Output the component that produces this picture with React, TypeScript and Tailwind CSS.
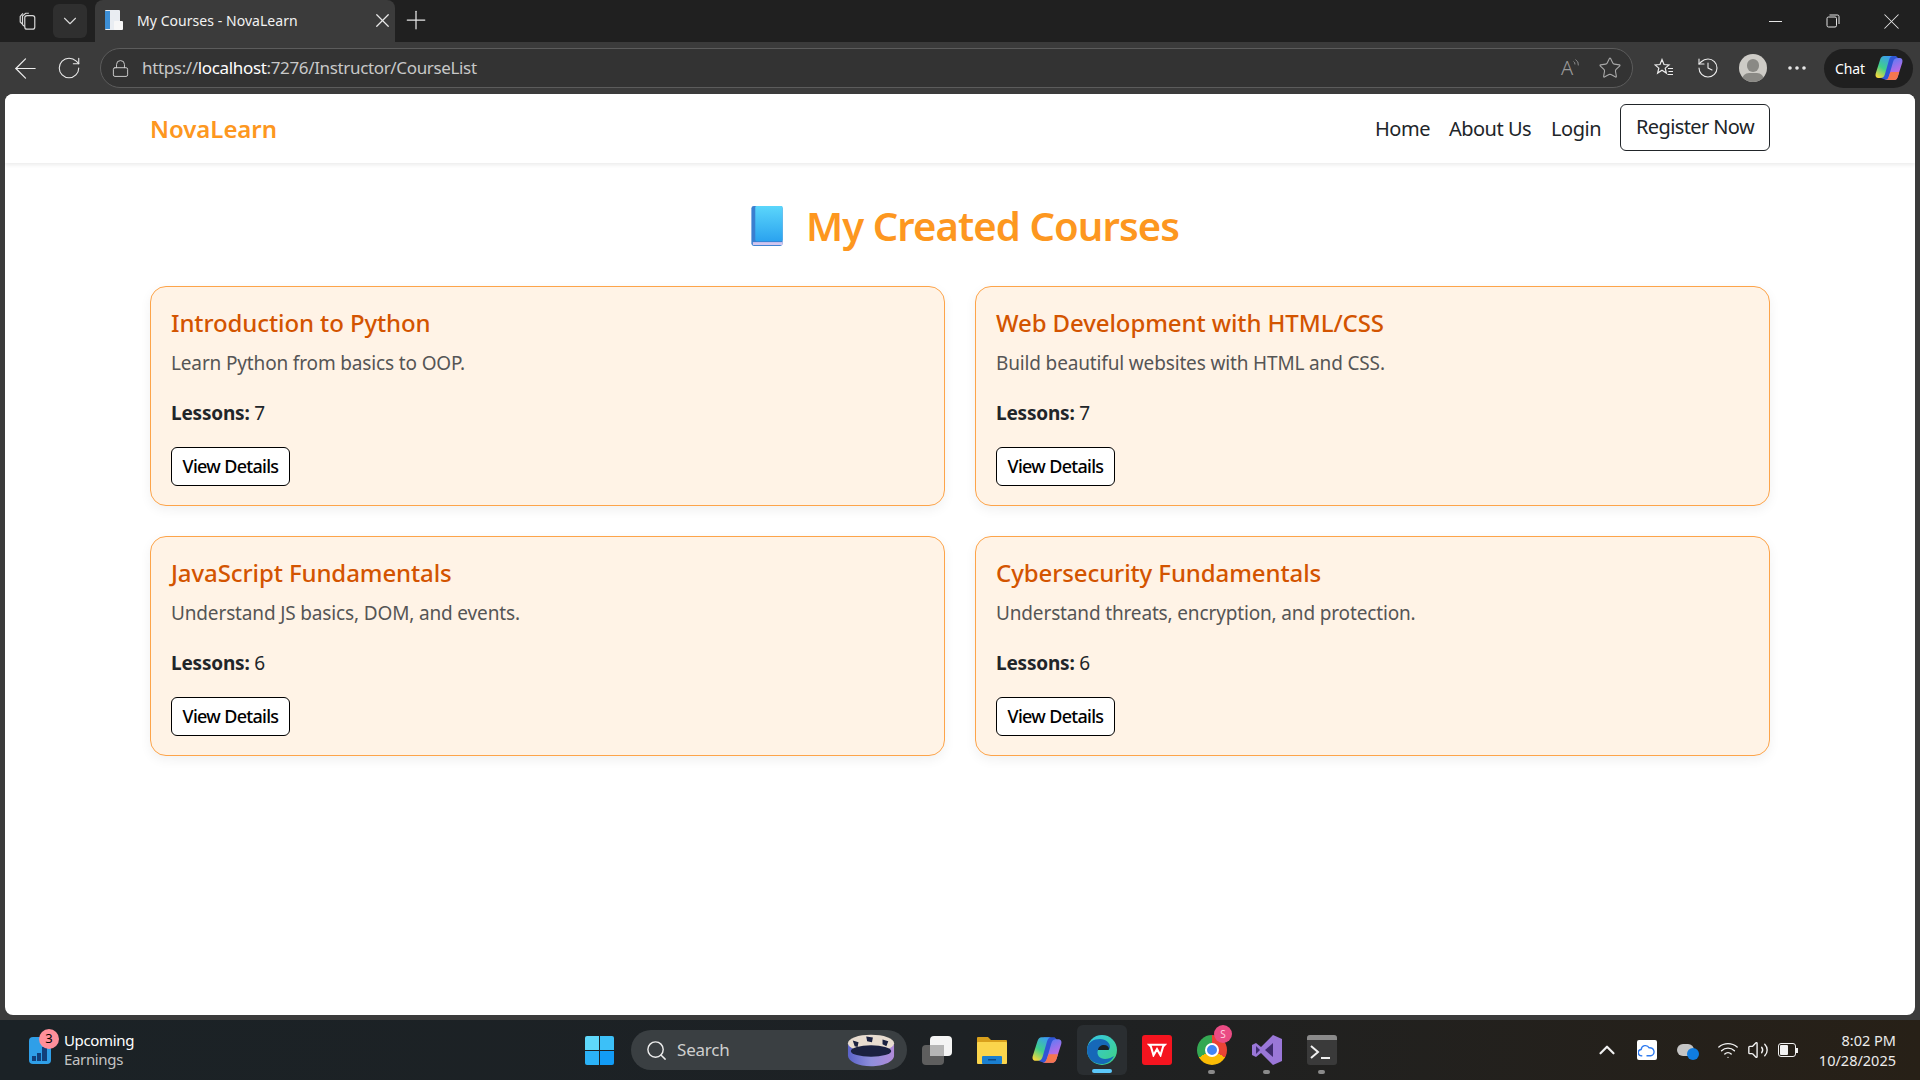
import { ChevronDown, ChevronUp, ArrowLeft, History, Lock, MoreHorizontal, Plus, RotateCw, Search, Star, Volume2, Wifi, X } from "lucide-react";

const courses = [
  { title: "Introduction to Python", description: "Learn Python from basics to OOP.", lessons: 7 },
  { title: "Web Development with HTML/CSS", description: "Build beautiful websites with HTML and CSS.", lessons: 7 },
  { title: "JavaScript Fundamentals", description: "Understand JS basics, DOM, and events.", lessons: 6 },
  { title: "Cybersecurity Fundamentals", description: "Understand threats, encryption, and protection.", lessons: 6 },
];

function BookIcon({ className }: { className?: string }) {
  return (
    <svg viewBox="0 0 32 42" className={className}>
      <defs>
        <linearGradient id="bookFill" x1="0" y1="0" x2="0" y2="1">
          <stop offset="0" stopColor="#5bd6fb" />
          <stop offset="1" stopColor="#2ba3ef" />
        </linearGradient>
      </defs>
      <rect x="0" y="0" width="32" height="41" rx="2.5" fill="#3a7fd0" />
      <rect x="4" y="0" width="28" height="36" rx="1.5" fill="url(#bookFill)" />
      <rect x="1.5" y="37" width="30.5" height="3" fill="#d3c6ee" />
    </svg>
  );
}

function CopilotIcon({ className, id }: { className?: string; id: string }) {
  return (
    <svg viewBox="0 0 28 28" className={className}>
      <defs>
        <linearGradient id={`${id}A`} x1="0.7" y1="0" x2="0.2" y2="1">
          <stop offset="0" stopColor="#3b9cf0" />
          <stop offset="0.55" stopColor="#3fd08a" />
          <stop offset="1" stopColor="#f6d83c" />
        </linearGradient>
        <linearGradient id={`${id}B`} x1="0.4" y1="0" x2="0.8" y2="1">
          <stop offset="0" stopColor="#5a7df5" />
          <stop offset="0.55" stopColor="#b06ce8" />
          <stop offset="1" stopColor="#ec6fc0" />
        </linearGradient>
      </defs>
      <path d="M11 2h10l2 2-5 20-7 2-5-2z" fill="#2f55d4" />
      <path d="M9 2h9c-2 0-3 1-4 4l-4 14c-1 3-2 4-5 4H3.500C1 24 0 22 .7 19.500L5 6C6 3 7 2 9 2z" fill={`url(#${id}A)`} />
      <path d="M19 26h-9c2 0 3-1 4-4l4-14c1-3 2-4 5-4h1.500c2.500 0 3.500 2 2.800 4.500L23 22c-1 3-2 4-4 4z" fill={`url(#${id}B)`} />
      <path d="M10 26h9c2 0 3-1 4-4l1.200-4H15.500L14 22c-1 3-2 4-4 4z" fill="#f4764f" />
    </svg>
  );
}

function TabStrip() {
  return (
    <div className="flex h-[42px] shrink-0 items-end bg-[#202020] font-['Noto_Sans',sans-serif] text-white">
      <div className="flex h-[42px] w-[42px] shrink-0 items-center justify-center pl-[12px]">
        <svg viewBox="0 0 20 22" className="h-[20px] w-[19px]" fill="none" stroke="#d8d8d8" strokeWidth="1.300">
          <rect x="7" y="5" width="11" height="15" rx="2.500" />
          <path d="M7 17 4.500 15V5.500L8 2.500h3.500M4 14 2 12V6l3-3.500" />
        </svg>
      </div>
      <div className="mb-[4px] ml-[11px] flex h-[34px] w-[34px] shrink-0 items-center justify-center rounded-md bg-[#2f2f2f]">
        <ChevronDown className="h-[22px] w-[22px] text-[#d8d8d8]" strokeWidth={1.200} />
      </div>
      <div className="ml-[8px] flex h-[42px] w-[300px] shrink-0 items-center rounded-t-lg bg-[#3b3b3b] pb-[2px] pl-[9px] pr-[1px]">
        <svg viewBox="0 0 20 22" className="h-[22px] w-[20px] shrink-0">
          <rect x="1" y="1" width="15" height="20" rx="1" fill="#e9edf2" />
          <rect x="1" y="2" width="5" height="18" fill="#3d8fd6" />
          <rect x="10" y="12" width="9" height="9" rx="1" fill="#f7f7f7" />
        </svg>
        <span className="ml-[13px] flex-1 text-[14px] tracking-[0.05px] text-[#f2f2f2]">My Courses - NovaLearn</span>
        <X className="h-[23px] w-[23px] text-[#e8e8e8]" strokeWidth={1.300} />
      </div>
      <div className="flex h-[42px] w-[42px] shrink-0 items-center justify-center pb-[2px]">
        <Plus className="h-[30px] w-[30px] text-[#e5e5e5]" strokeWidth={1} />
      </div>
      <div className="flex-1" />
      <div className="flex h-[42px] items-center">
        <div className="flex w-[58px] justify-center">
          <div className="h-[1px] w-[13px] bg-[#e5e5e5]" />
        </div>
        <div className="flex w-[58px] justify-center">
          <svg viewBox="0 0 14 14" className="h-[14px] w-[14px]" fill="none" stroke="#e5e5e5" strokeWidth="1">
            <rect x="1" y="3" width="9.500" height="10" rx="1.500" />
            <path d="M3.500 1h8a1.500 1.500 0 0 1 1.500 1.500V10" />
          </svg>
        </div>
        <div className="flex w-[58px] justify-center">
          <X className="h-[27px] w-[27px] text-[#e5e5e5]" strokeWidth={0.900} />
        </div>
      </div>
    </div>
  );
}

function Toolbar() {
  return (
    <div className="flex h-[52px] shrink-0 items-center bg-[#3b3b3b] font-['Noto_Sans',sans-serif] text-white">
      <div className="flex w-[100px] shrink-0 items-center gap-[14px] pl-[9px]">
        <ArrowLeft className="h-[33px] w-[33px] text-[#ececec]" strokeWidth={0.900} />
        <RotateCw className="h-[26px] w-[26px] text-[#ececec]" strokeWidth={1} />
      </div>
      <div className="flex h-[40px] w-[1533px] shrink-0 items-center rounded-full border border-[#5c5c5c] bg-[#333333] pl-[10px] pr-[10px]">
        <Lock className="h-[19px] w-[19px] text-[#d0d0d0]" strokeWidth={1.200} />
        <div className="ml-[12px] flex-1 text-[17px] tracking-[-0.35px] text-[#c8c8c8]">
          https://<span className="text-white">localhost</span>:7276/Instructor/CourseList
        </div>
        <div className="mr-[19px] flex w-[18px] items-start">
          <span className="text-[20px] font-light leading-none text-[#9a9a9a]">A</span>
          <svg viewBox="0 0 6 8" className="mt-[1px] h-[8px] w-[6px]" fill="none" stroke="#9a9a9a" strokeWidth="0.900">
            <path d="M0.500 2.500a3 3 0 0 1 1.500 3M2.500 0.500a6 6 0 0 1 3 6" />
          </svg>
        </div>
        <Star className="h-[24px] w-[24px] text-[#a8a8a8]" strokeWidth={1.100} />
      </div>
      <div className="ml-[21px] flex items-center">
        <svg viewBox="0 0 20 20" className="h-[20px] w-[20px]" fill="none" stroke="#ececec" strokeWidth="1.200">
          <path d="M8 1.500 10 6.500l5 .4-3.800 3.200 1.200 5L8 12.300 3.600 15.100l1.200-5L1 6.900l5-.4z" />
          <path d="M14 10.500h5M14.500 13.500h4.500M13.500 16.500h5.500" />
        </svg>
        <History className="ml-[22px] h-[24px] w-[24px] text-[#ececec]" strokeWidth={1.100} />
        <div className="relative ml-[19px] h-[28px] w-[28px] overflow-hidden rounded-full bg-[#cdcbc6]">
          <div className="absolute left-[8px] top-[5px] h-[13px] w-[12px] rounded-full bg-[#8a8985]" />
          <div className="absolute left-[3px] top-[19px] h-[14px] w-[22px] rounded-full bg-[#8a8985]" />
        </div>
        <MoreHorizontal className="ml-[18px] h-[24px] w-[24px] text-[#ececec]" strokeWidth={1.600} />
      </div>
      <div className="ml-[15px] flex h-[39px] w-[89px] shrink-0 items-center rounded-full bg-[#1f1f1f] pl-[11px]">
        <span className="text-[14px] tracking-[-0.1px]">Chat</span>
        <CopilotIcon id="chatCop" className="ml-[10px] h-[28px] w-[28px]" />
      </div>
    </div>
  );
}

function Navbar() {
  return (
    <nav className="flex h-[69px] shrink-0 items-center justify-between bg-white pl-[145px] pr-[145px] shadow-[0_2px_4px_rgba(0,0,0,0.08)]">
      <a className="text-[24px] font-semibold tracking-[-0.05px] text-[#fd9720]">NovaLearn</a>
      <div className="flex items-center text-[20px] tracking-[-0.5px] text-[#212529]">
        <a className="mr-[19px]">Home</a>
        <a className="mr-[20px]">About Us</a>
        <a className="mr-[19px]">Login</a>
        <a className="-mt-[3px] flex h-[47px] w-[150px] items-center justify-center rounded-md border border-[#212529] tracking-[-0.6px]">Register Now</a>
      </div>
    </nav>
  );
}

function CourseCard({ title, description, lessons }: { title: string; description: string; lessons: number }) {
  return (
    <div className="h-[220px] rounded-2xl border border-[#fda44a] bg-[#fff3e6] px-[20px] pt-[18px] shadow-[0_4px_12px_rgba(0,0,0,0.06)]">
      <h3 className="text-[24px] leading-[36px] font-medium tracking-[-0.1px] text-[#d35400]">{title}</h3>
      <p className="mt-[7px] text-[19px] leading-[30px] tracking-[-0.15px] text-[#555555]">{description}</p>
      <p className="mt-[20px] text-[19px] leading-[30px] tracking-[-0.2px] text-[#212529]">
        <b className="font-bold">Lessons:</b> {lessons}
      </p>
      <a className="mt-[19px] flex h-[39px] w-[119px] items-center justify-center rounded-md border border-black bg-white text-[18px] font-medium tracking-[-0.7px] text-black">
        View Details
      </a>
    </div>
  );
}

function Taskbar() {
  return (
    <div className="flex h-[60px] shrink-0 items-center bg-gradient-to-r from-[#1b2226] via-[#1d2124] to-[#272017] font-['Noto_Sans',sans-serif] text-white">
      <div className="flex w-[585px] shrink-0 items-center pl-[29px]">
        <div className="relative h-[27px] w-[22px] rounded-sm bg-[#2f9fe8]">
          <div className="absolute bottom-[3px] left-[3px] flex items-end gap-[1px]">
            <div className="h-[5px] w-[4px] bg-[#123f7a]" />
            <div className="h-[8px] w-[4px] bg-[#123f7a]" />
            <div className="h-[14px] w-[5px] bg-[#123f7a]" />
          </div>
          <div className="absolute -right-[8px] -top-[8px] flex h-[20px] w-[20px] items-center justify-center rounded-full bg-[#ff8f9a] text-[13px] text-black">3</div>
        </div>
        <div className="ml-[13px] text-[15px] leading-[19px] tracking-[-0.35px]">
          <div>Upcoming</div>
          <div className="text-[#c4c4c4]">Earnings</div>
        </div>
      </div>
      <div className="grid h-[29px] w-[29px] shrink-0 grid-cols-2 gap-[1px]">
        <div className="rounded-tl-[2px] bg-[#5fd8fa]" />
        <div className="rounded-tr-[2px] bg-[#3cc0f8]" />
        <div className="rounded-bl-[2px] bg-[#2bb2f7]" />
        <div className="rounded-br-[2px] bg-[#129bf5]" />
      </div>
      <div className="ml-[17px] flex h-[40px] w-[276px] shrink-0 items-center rounded-full bg-[#3a3f42] pl-[14px] pr-[12px]">
        <Search className="h-[23px] w-[23px] text-[#ececec]" strokeWidth={1.500} />
        <span className="ml-[9px] flex-1 text-[17px] tracking-[-0.2px] text-[#cfcfcf]">Search</span>
        <svg viewBox="0 0 50 36" className="h-[36px] w-[48px]">
          <defs>
            <linearGradient id="ringSide" x1="0" y1="0" x2="1" y2="0">
              <stop offset="0" stopColor="#5a62c8" />
              <stop offset="0.5" stopColor="#8f8fdc" />
              <stop offset="1" stopColor="#b08ad8" />
            </linearGradient>
          </defs>
          <path d="M1 12v12c0 6 11 11 24 11s24-5 24-11V12z" fill="url(#ringSide)" />
          <ellipse cx="25" cy="11" rx="24" ry="9" fill="#e8dcd0" />
          <ellipse cx="25" cy="19" rx="21" ry="6" fill="#1b2140" />
          <path d="M6 8l6 2-1 5-3-1zM20 4l7 1-1 5-5-1zM37 7l6 2-2 5-4-2z" fill="#1b2140" />
        </svg>
      </div>
      <div className="ml-[15px] flex items-center">
        <div className="relative h-[29px] w-[30px] shrink-0">
          <div className="absolute bottom-0 left-0 h-[20px] w-[22px] rounded-sm bg-[#5e5e5e]" />
          <div className="absolute right-0 top-0 h-[20px] w-[22px] rounded-sm bg-[#f4f4f4]" />
          <div className="absolute left-[8px] top-[9px] h-[11px] w-[14px] bg-[#b5b5b5]" />
        </div>
        <svg viewBox="0 0 30 30" className="ml-[25px] h-[30px] w-[30px]">
          <path d="M0 3a1 1 0 0 1 1-1h10l3 3h15a1 1 0 0 1 1 1v3H0z" fill="#d9a01c" />
          <rect x="0" y="7" width="30" height="22" rx="1" fill="#fbd54c" />
          <rect x="5" y="21" width="20" height="8" rx="1" fill="#1a7fd0" />
          <rect x="11" y="24" width="8" height="1.500" fill="#0c4a86" />
        </svg>
        <CopilotIcon id="barCop" className="ml-[25px] h-[30px] w-[30px]" />
        <div className="relative ml-[15px] flex h-[50px] w-[50px] items-center justify-center rounded-md bg-[#2a2e31]">
          <svg viewBox="0 0 32 32" className="h-[32px] w-[32px]">
            <defs>
              <linearGradient id="edgeA" x1="0" y1="0" x2="1" y2="1">
                <stop offset="0" stopColor="#36c7e8" />
                <stop offset="1" stopColor="#3fd27f" />
              </linearGradient>
            </defs>
            <circle cx="16" cy="16" r="15" fill="url(#edgeA)" />
            <path d="M1 16C1 8 8 5 14 5s10 4 10 8c0 2-1 3-3 3H12c-2 5 2 9 7 9 3 0 6-1 9-3-3 6-8 8-12 8C7 30 1 24 1 16z" fill="#1668b8" />
            <path d="M12 16c0-3 3-5 6-5s5 2 5 4c0 1-1 1-2 1z" fill="#1b2226" />
          </svg>
          <div className="absolute bottom-[2px] h-[4px] w-[20px] rounded-full bg-[#5cc8fa]" />
        </div>
        <div className="ml-[15px] flex h-[30px] w-[30px] items-center justify-center rounded-[3px] bg-[#f5141f]">
          <svg viewBox="0 0 20 16" className="h-[14px] w-[20px]" fill="none" stroke="#fff" strokeWidth="2.400">
            <path d="M1 2h18l-2 2-3 10-4-7-4 7-3-10z" />
          </svg>
        </div>
        <div className="relative ml-[25px] h-[30px] w-[30px]">
          <div className="h-[30px] w-[30px] rounded-full bg-[conic-gradient(#ea4335_0deg_120deg,#fbbc05_120deg_240deg,#34a853_240deg_360deg)]" />
          <div className="absolute left-[8px] top-[8px] h-[14px] w-[14px] rounded-full border-2 border-white bg-[#4285f4]" />
          <div className="absolute -right-[5px] -top-[10px] flex h-[18px] w-[18px] items-center justify-center rounded-full bg-[#ea4c84] text-[10px] text-[#ffd0e0]">S</div>
          <div className="absolute -bottom-[9px] left-[11px] h-[4px] w-[7px] rounded-full bg-[#8a8a8a]" />
        </div>
        <div className="relative ml-[25px] h-[30px] w-[30px]">
          <svg viewBox="0 0 30 30" className="h-[30px] w-[30px]">
            <path d="M21 0 30 4v22l-9 4L9 18l-5 4-4-2V10l4-2 5 4z" fill="#9a77d8" />
            <path d="M21 8v14l-8-7z" fill="#3e2b6e" />
            <path d="M4 11v8l4-4z" fill="#3e2b6e" />
          </svg>
          <div className="absolute -bottom-[9px] left-[11px] h-[4px] w-[7px] rounded-full bg-[#8a8a8a]" />
        </div>
        <div className="relative ml-[25px] h-[30px] w-[30px]">
          <div className="h-[30px] w-[30px] overflow-hidden rounded-[3px] bg-[#3a3a3a]">
            <div className="h-[5px] bg-[#8a8a8a]" />
            <svg viewBox="0 0 30 25" className="h-[25px] w-[30px]" fill="none" stroke="#f0f0f0" strokeWidth="2">
              <path d="M4 6l7 6-7 6" />
              <path d="M14 18h9" />
            </svg>
          </div>
          <div className="absolute -bottom-[9px] left-[11px] h-[4px] w-[7px] rounded-full bg-[#8a8a8a]" />
        </div>
      </div>
      <div className="flex-1" />
      <div className="flex items-center pr-[24px]">
        <ChevronUp className="h-[26px] w-[26px] text-[#f0f0f0]" strokeWidth={2} />
        <div className="ml-[17px] flex h-[20px] w-[20px] items-center justify-center rounded-[2px] bg-white">
          <svg viewBox="0 0 16 12" className="h-[13px] w-[17px]" fill="none" stroke="#2f7bf0" strokeWidth="1.300">
            <path d="M4 11H3.500a3 3 0 0 1-.5-6 4 4 0 0 1 7.500-1.500A3.500 3.500 0 0 1 12 11H8" />
          </svg>
        </div>
        <div className="relative ml-[20px] h-[20px] w-[22px]">
          <div className="absolute left-0 top-[4px] h-[12px] w-[17px] rounded-full bg-[#c4c4c4]" />
          <div className="absolute bottom-0 right-0 h-[12px] w-[12px] rounded-full bg-[#0f7ce0]" />
        </div>
        <Wifi className="ml-[18px] h-[22px] w-[22px] text-[#f2f2f2]" strokeWidth={1.500} />
        <Volume2 className="ml-[8px] h-[22px] w-[22px] text-[#f2f2f2]" strokeWidth={1.500} />
        <div className="relative ml-[9px] flex h-[14px] w-[18px] items-center rounded-[3px] border border-[#f2f2f2] p-[1px]">
          <div className="h-full w-[8px] rounded-[1px] bg-[#f2f2f2]" />
          <div className="absolute -right-[3px] h-[5px] w-[2px] bg-[#f2f2f2]" />
        </div>
        <div className="ml-[23px] text-right text-[14.500px] leading-[20px] text-[#ececec]">
          <div>8:02 PM</div>
          <div>10/28/2025</div>
        </div>
      </div>
    </div>
  );
}

export default function App() {
  return (
    <div className="flex h-[1080px] w-[1920px] flex-col overflow-hidden bg-[#3b3b3b] font-['Noto_Sans',sans-serif]">
      <TabStrip />
      <Toolbar />
      <div className="mx-[5px] flex h-[921px] shrink-0 flex-col overflow-hidden rounded-lg bg-white">
        <Navbar />
        <main className="px-[145px]">
          <h1 className="mt-[33px] flex items-center justify-center pl-[10px] text-[40px] leading-[60px] font-semibold tracking-[-0.9px] text-[#fd9720]">
            <BookIcon className="mr-[23px] h-[41px] w-[32px]" />
            My Created Courses
          </h1>
          <div className="mt-[30px] grid grid-cols-2 gap-x-[30px] gap-y-[30px]">
            {courses.map((course) => (
              <CourseCard key={course.title} {...course} />
            ))}
          </div>
        </main>
      </div>
      <div className="h-[5px] shrink-0" />
      <Taskbar />
    </div>
  );
}
